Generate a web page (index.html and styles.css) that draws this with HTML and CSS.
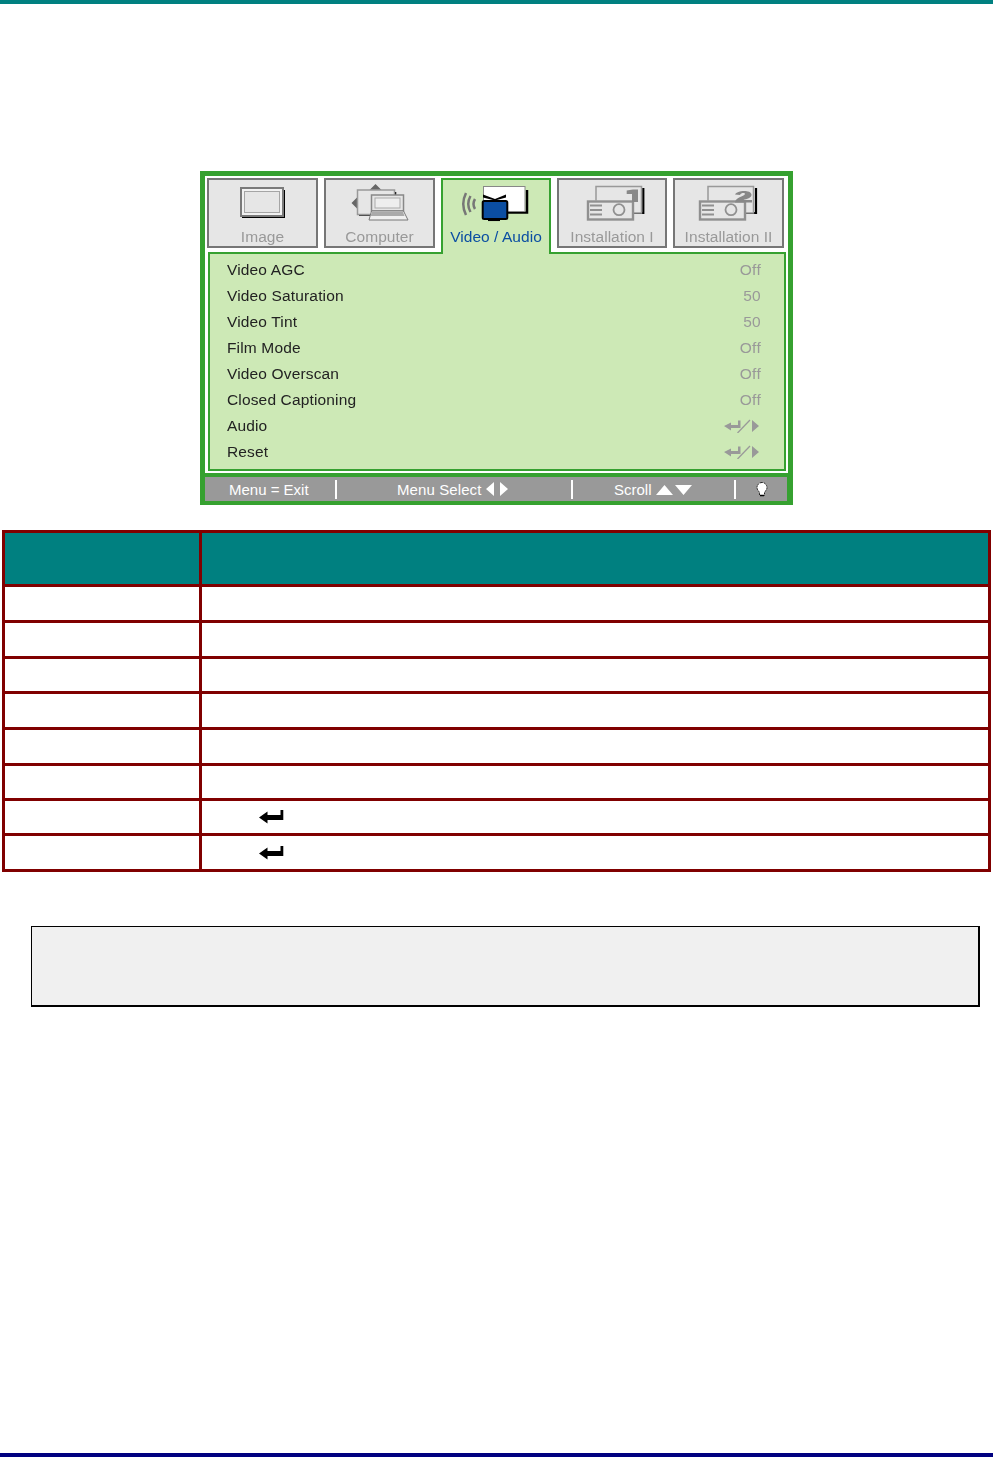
FILE: index.html
```html
<!DOCTYPE html>
<html lang="en">
<head>
<meta charset="utf-8">
<title>Video / Audio menu</title>
<link rel="stylesheet" href="styles.css">
</head>
<body>
<div class="top-rule"></div>
<section class="osd">
  <div class="tabs">
    <div class="tab">
      <svg class="tab-icon" viewBox="0 0 50 36"><rect x="4" y="5" width="43" height="28" fill="#000"/><rect x="3" y="3" width="42" height="28" fill="#f2f2f2" stroke="#7a7a7a" stroke-width="2"/><rect x="6.500" y="6.500" width="35" height="21" fill="#e6e6e6" stroke="#a5a5a5" stroke-width="1"/></svg>
      <span>Image</span>
    </div>
    <div class="tab">
      <svg class="tab-icon" viewBox="0 0 60 36"><path d="M25.500-1l6 6h-12zM1.500 18l6-6v12z" fill="#666"/><path d="M9 30h14M45.500 7v4" fill="none" stroke="#000" stroke-width="1.500"/><rect x="7.500" y="5" width="37" height="24.500" fill="#e6e6e6" stroke="#999" stroke-width="1.500"/><rect x="21.500" y="10" width="32" height="16" fill="#e6e6e6" stroke="#888" stroke-width="1.500"/><rect x="25" y="13" width="25" height="10" fill="#eee" stroke="#aaa"/><path d="M21.500 26h32l4.500 9H19z" fill="#f0f0f0" stroke="#777" stroke-width="1"/><path d="M22 27h31l1.500 4h-34z" fill="#aaa"/></svg>
      <span>Computer</span>
    </div>
    <div class="tab tab-active">
      <svg class="tab-icon" viewBox="0 0 72 36"><path d="M47 27.500h20V5" fill="none" stroke="#000" stroke-width="2.500"/><rect x="23.500" y="1.500" width="41.500" height="25" fill="#fff" stroke="#888" stroke-width="1"/><path d="M6 8Q.5 19 6 30M10.500 11Q6 19 10.500 27M15 14q-3 5 0 10" fill="none" stroke="#777" stroke-width="2.500"/><path d="M23 9.500l12 4.500 11-4.500v3l-11 3-12-3z" fill="#000"/><rect x="22.700" y="16" width="24.600" height="18" rx="1.500" fill="#0b4ea2" stroke="#000" stroke-width="2"/><path d="M28 35.300h12" stroke="#000" stroke-width="1.500"/></svg>
      <span>Video / Audio</span>
    </div>
    <div class="tab">
      <svg class="tab-icon" viewBox="0 0 60 36"><path d="M51 28h10.300V3" fill="none" stroke="#000" stroke-width="2.200"/><path d="M14 15.500V1.500h45.500V28H51" fill="#e6e6e6" stroke="#999" stroke-width="1.500"/><rect x="6" y="16.500" width="45" height="18" fill="#e6e6e6" stroke="#909090" stroke-width="2.400"/><path d="M8 20.500h12M8 25h12M8 29.500h12" stroke="#909090" stroke-width="1.800"/><circle cx="37" cy="24.700" r="5.500" fill="#e6e6e6" stroke="#909090" stroke-width="1.800"/><path d="M44.700 5.500l6.300-1h5V17h-6V9h-5.300z" fill="#888"/></svg>
      <span>Installation I</span>
    </div>
    <div class="tab">
      <svg class="tab-icon icon-left" viewBox="0 0 60 36"><path d="M51 28h11V3" fill="none" stroke="#000" stroke-width="2.200"/><path d="M14 15.500V1.500h45.500V28H51" fill="#e6e6e6" stroke="#999" stroke-width="1.500"/><rect x="6" y="16.500" width="45" height="18" fill="#e6e6e6" stroke="#909090" stroke-width="2.400"/><path d="M8 20.500h12M8 25h12M8 29.500h12" stroke="#909090" stroke-width="1.800"/><circle cx="37" cy="24.700" r="5.500" fill="#e6e6e6" stroke="#909090" stroke-width="1.800"/><path d="M41 9.500c2-4.500 16-5 16.500 0 .3 3.500-5 4.500-8 5.500H58v2.500H41c0-5 9-6 10-8.500 0-1.500-4-1.500-5 1z" fill="#888"/></svg>
      <span>Installation II</span>
    </div>
  </div>
  <div class="panel">
    <div class="row"><span>Video AGC</span><span class="val">Off</span></div>
    <div class="row"><span>Video Saturation</span><span class="val">50</span></div>
    <div class="row"><span>Video Tint</span><span class="val">50</span></div>
    <div class="row"><span>Film Mode</span><span class="val">Off</span></div>
    <div class="row"><span>Video Overscan</span><span class="val">Off</span></div>
    <div class="row"><span>Closed Captioning</span><span class="val">Off</span></div>
    <div class="row"><span>Audio</span><svg class="enter-slash" viewBox="0 0 36 14"><path d="M0 7l7-3.500V6h7V1.500h2.500V9H7v2.500z M28 1l7 6-7 6z" fill="#999"/><path d="M13.500 14L26 1" stroke="#999" stroke-width="1.300"/></svg></div>
    <div class="row"><span>Reset</span><svg class="enter-slash" viewBox="0 0 36 14"><path d="M0 7l7-3.500V6h7V1.500h2.500V9H7v2.500z M28 1l7 6-7 6z" fill="#999"/><path d="M13.500 14L26 1" stroke="#999" stroke-width="1.300"/></svg></div>
  </div>
  <div class="status">
    <span class="s-exit">Menu = Exit</span>
    <span class="s-div"></span>
    <span class="s-select">Menu Select<svg class="s-arrows" viewBox="0 0 22 14"><path d="M8 0v14L0 7zM14 0v14l8-7z" fill="#fff"/></svg></span>
    <span class="s-div"></span>
    <span class="s-scroll">Scroll<svg class="s-updown" viewBox="0 0 36 11"><path d="M0 11L8.500 1 17 11zM19 1h17l-8.500 10z" fill="#fff"/></svg></span>
    <span class="s-div"></span>
    <svg class="s-bulb" viewBox="0 0 16 16"><path d="M8 1.500a5 5 0 0 0-3.200 8.800l.7 1.200v3h5v-3l.7-1.200A5 5 0 0 0 8 1.500z" fill="#fff" stroke="#222" stroke-width="1" stroke-dasharray="2 .8"/><path d="M6 14.500h4" stroke="#000" stroke-width="1.500"/></svg>
  </div>
</section>

<table class="spec">
  <thead><tr><th class="c1"></th><th></th></tr></thead>
  <tbody>
    <tr><td></td><td></td></tr>
    <tr><td></td><td></td></tr>
    <tr class="short"><td></td><td></td></tr>
    <tr><td></td><td></td></tr>
    <tr><td></td><td></td></tr>
    <tr class="short"><td></td><td></td></tr>
    <tr class="short"><td></td><td class="has-enter"><svg class="enter" viewBox="0 0 26 14"><path d="M1 7.500l8.500-6V5h13V0h2.800v10H9.500v3.500z" fill="#000"/></svg></td></tr>
    <tr><td></td><td class="has-enter"><svg class="enter" viewBox="0 0 26 14"><path d="M1 7.500l8.500-6V5h13V0h2.800v10H9.500v3.500z" fill="#000"/></svg></td></tr>
  </tbody>
</table>

<div class="note"></div>
<div class="bottom-rule"></div>
</body>
</html>
```
FILE: styles.css
```css
html, body { margin: 0; padding: 0; height: 100%; }
body {
  display: flex;
  flex-direction: column;
  min-height: 1457px;
  background: #fff;
  font-family: "Liberation Sans", Arial, sans-serif;
}
.top-rule { height: 4px; background: #008080; flex: none; }
.bottom-rule { height: 4px; background: #000080; flex: none; margin-top: auto; }

.osd {
  flex: none;
  box-sizing: border-box;
  width: 593px;
  margin: 167px 0 0 200px;
  background: #fff;
  border: 5px solid #36a130;
  border-bottom-width: 0;
  padding: 2px 3px 0 2px;
  font-size: 15.5px;
}
.tabs { display: flex; gap: 6px; height: 76px; align-items: flex-start; }
.tab {
  box-sizing: border-box;
  flex: none;
  width: 111px;
  height: 70px;
  border: 2px solid #767676;
  background: #e6e6e6;
  color: #999;
  text-align: center;
  display: flex;
  flex-direction: column;
  align-items: center;
}
.tab:nth-child(4) { width: 110px; }
.tab span { display: block; margin-top: 7px; white-space: nowrap; letter-spacing: .05px; line-height: 17px; filter: blur(.3px); }
.tab-icon { display: block; flex: none; height: 36px; width: auto; margin-top: 5px; overflow: visible; filter: blur(.3px); }
.icon-left { margin-right: 9px; }
.tab-active {
  position: relative;
  z-index: 1;
  width: 110px;
  height: 76px;
  border-color: #36a130;
  border-bottom: 0;
  background: #cde9b6;
  color: #0b4ea2;
}
.panel {
  box-sizing: border-box;
  margin: -2px 0 0 1px;
  width: 578px;
  height: 219px;
  padding: 3px 23px 0 17px;
  border: 2px solid #36a130;
  background: #cde9b6;
  color: #222;
}
.row { height: 26px; display: flex; justify-content: space-between; align-items: center; letter-spacing: .15px; }
.row span { filter: blur(.3px); }
.row .val { color: #999; letter-spacing: .3px; }
.enter-slash { width: 36px; height: 14px; margin-right: 1px; filter: blur(.3px); }
.status {
  box-sizing: border-box;
  height: 28px;
  margin: 2px -3px 0 -2px;
  border-top: 4px solid #36a130;
  border-right: 1px solid #36a130;
  background: #999;
  color: #fff;
  display: flex;
  align-items: center;
  font-size: 15px;
}
.s-exit { margin-left: 24px; width: 106px; white-space: nowrap; }
.s-div { width: 2px; height: 19px; background: #fff; flex: none; }
.s-select { margin-left: 60px; width: 174px; display: flex; align-items: center; gap: 5px; white-space: nowrap; letter-spacing: .1px; }
.s-scroll { margin-left: 41px; width: 120px; display: flex; align-items: center; gap: 4px; white-space: nowrap; }
.s-arrows { width: 22px; height: 14px; flex: none; }
.s-updown { width: 36px; height: 11px; flex: none; }
.s-bulb { width: 16px; height: 16px; margin-left: 18px; flex: none; }
.osd::after { content: ""; display: block; height: 4px; background: #36a130; margin: 0 -3px 0 -2px; }

.spec {
  flex: none;
  box-sizing: border-box;
  width: 989px;
  margin: 25px 0 0 2px;
  border-collapse: collapse;
  table-layout: fixed;
}
.spec th, .spec td { border: 3px solid #800000; padding: 0; height: 33px; }
.spec th { background: #008080; height: 51px; }
.spec .c1 { width: 194px; }
.spec .short td { height: 32px; }
.spec .has-enter { line-height: 0; padding-left: 56px; }
.enter { width: 26px; height: 14px; display: block; }

.note {
  flex: none;
  box-sizing: border-box;
  width: 949px;
  height: 81px;
  margin: 54px 0 0 31px;
  background: #f0f0f0;
  border: 1px solid #000;
  border-right-width: 2px;
  border-bottom-width: 2px;
}
```
